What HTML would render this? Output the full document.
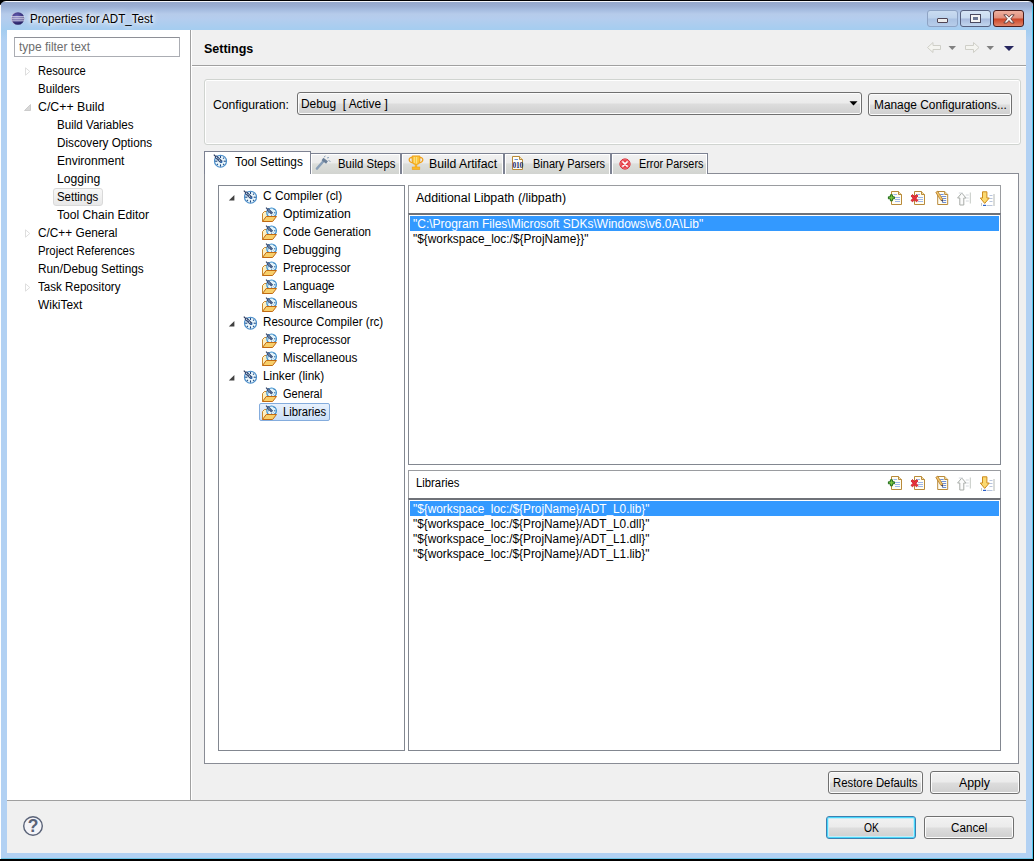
<!DOCTYPE html>
<html><head><meta charset="utf-8"><title>Properties for ADT_Test</title>
<style>
html,body{margin:0;padding:0;}
body{width:1034px;height:861px;overflow:hidden;background:#000;position:relative;font-family:"Liberation Sans",sans-serif;font-size:12px;color:#000;}
.a{position:absolute;}
.t{position:absolute;white-space:nowrap;line-height:18px;height:18px;transform-origin:0 50%;}
.b{font-weight:bold;}
#frame{left:0;top:1px;width:1034px;height:858px;background:linear-gradient(#f4f6fb 0,#f4f6fb 1px,#96a9cc 1.5px,#9aaed2 5px,#a6bde0 9px,#b6cbea 13px,#b4cdee 18px,#a4cdf0 29px,#b2d1f3 40px,#b2d1f3 100%);border-radius:6px 6px 0 0;}
#content{left:7px;top:30px;width:1019px;height:823px;background:#f0f0f0;}
#leftpane{left:7px;top:30px;width:183px;height:770px;background:#fff;}
.btn{position:absolute;box-sizing:border-box;border:1px solid #707070;border-radius:3px;background:linear-gradient(#f2f2f2 0,#ebebeb 48%,#dddddd 52%,#cfcfcf 100%);box-shadow:inset 0 0 0 1px #fcfcfc;}
.wb{box-sizing:border-box;border:1px solid #8ea3c4;border-radius:3px;background:linear-gradient(#c9dbf0 0,#bdd2ec 48%,#a9c1e2 52%,#b7cdea 100%);}
.tab{position:absolute;box-sizing:border-box;border:1px solid #7d8292;border-bottom:none;background:linear-gradient(#f2f2f2 0,#ebebeb 45%,#dcdedb 49%,#d2d4d0 100%);box-shadow:inset 1px 1px 0 #fff, inset -1px 0 0 #fff;}
.list{position:absolute;box-sizing:border-box;background:#fff;border:1px solid #828790;}
.sel{position:absolute;background:#3399ff;height:15px;}
</style></head><body>
<div class="a" id="frame"></div>
<div class="a" id="content"></div>
<div class="a" id="leftpane"></div>
<svg width="0" height="0" style="position:absolute"><defs>
<g id="icTool">
<circle cx="7.5" cy="8.2" r="6" fill="#eaf6fb" stroke="#4a8ecb" stroke-width="1.15"/>
<g stroke="#1f4a86" stroke-width="1.1">
<line x1="7.5" y1="2.8" x2="7.5" y2="5"/><line x1="7.5" y1="11.4" x2="7.5" y2="13.6"/>
<line x1="2.1" y1="8.2" x2="4.3" y2="8.2"/><line x1="10.7" y1="8.2" x2="12.9" y2="8.2"/>
<line x1="3.9" y1="11.8" x2="4.9" y2="10.8"/><line x1="11.1" y1="11.8" x2="10.1" y2="10.8"/>
<line x1="11.1" y1="4.6" x2="10.1" y2="5.6"/>
</g>
<path d="M.8 1.6 L3.2 4" stroke="#2a3a5e" stroke-width="1.2"/>
<path d="M2.6 3.4 L8.4 9" stroke="#2f4672" stroke-width="3" stroke-linecap="butt"/>
<path d="M3.2 4 L7.8 8.4" stroke="#cfe2f4" stroke-width="1.1" stroke-dasharray="1.1 .9"/>
<path d="M7 9.8 L9.4 7.6 L9.2 10 Z" fill="#1f5fae"/>
</g>
<g id="icOpt">
<path d="M1.5 14.5 L1.5 6.5 L3.5 4.5 L8 4.5 L9.5 6.5 L12.5 6.5 L12.5 9.5" fill="#fdf0c2" stroke="#c8852a" stroke-width="1"/>
<circle cx="10.6" cy="5.8" r="4.8" fill="#e2f4fb" stroke="#3b8fcf" stroke-width="1.2"/>
<g stroke="#2a5f9a" stroke-width="1"><line x1="10.6" y1="8.4" x2="10.6" y2="9.8"/><line x1="13" y1="5.8" x2="14.4" y2="5.8"/><line x1="12.6" y1="3" x2="13.4" y2="2.2"/><line x1="7" y1="5.8" x2="7.8" y2="5.8"/><line x1="13.3" y1="8.4" x2="12.6" y2="7.7"/></g>
<path d="M5 .6 L6.8 2.4" stroke="#2a3a5e" stroke-width="1.1"/>
<path d="M6.4 2 L11.2 6.6" stroke="#2f4672" stroke-width="2.6"/>
<path d="M6.9 2.5 L10.6 6" stroke="#cfe2f4" stroke-width="1" stroke-dasharray="1 .9"/>
<path d="M1.5 14.5 L5.2 9.5 L15.5 9.5 L11.6 14.5 Z" fill="#f8cf6a" stroke="#c26a12" stroke-width="1" stroke-linejoin="round"/>
</g>
<g id="doc">
<path d="M4.5 1.5 L11.5 1.5 L14.5 4.5 L14.5 14.5 L4.5 14.5 Z" fill="#fffdf2" stroke="#b98a3a" stroke-width="1"/>
<path d="M11.5 1.5 L11.5 4.5 L14.5 4.5" fill="#f3dfa8" stroke="#b98a3a" stroke-width="1"/>
<g stroke="#9db6ea" stroke-width="1"><line x1="6.5" y1="4.5" x2="10" y2="4.5"/><line x1="8" y1="7.5" x2="13" y2="7.5"/><line x1="8" y1="9.5" x2="13" y2="9.5"/><line x1="8" y1="11.5" x2="13" y2="11.5"/></g>
</g>
<g id="icAdd"><use href="#doc"/>
<path d="M3.4 4.8 L5.4 4.8 L5.4 6.8 L7.4 6.8 L7.4 8.8 L5.4 8.8 L5.4 10.8 L3.4 10.8 L3.4 8.8 L1.4 8.8 L1.4 6.8 L3.4 6.8 Z" fill="#7ec840" stroke="#1f6a1a" stroke-width="1" stroke-linejoin="round"/></g>
<g id="icDel"><use href="#doc"/>
<path d="M1 6 L2.6 4.6 L4.5 6.6 L6.4 4.6 L8 6 L6 8.2 L8 10.4 L6.4 11.8 L4.5 9.8 L2.6 11.8 L1 10.4 L3 8.2 Z" fill="#e8323c" stroke="#c41822" stroke-width=".8" stroke-linejoin="round"/></g>
<g id="icEdit" transform="translate(1.2,0)">
<path d="M3.5 1.5 L10.5 1.5 L13.5 4.5 L13.5 14.5 L3.5 14.5 Z" fill="#fffdf2" stroke="#b98a3a" stroke-width="1"/>
<path d="M10.5 1.5 L10.5 4.5 L13.5 4.5" fill="#f3dfa8" stroke="#b98a3a" stroke-width="1"/>
<g stroke="#6f8fd6" stroke-width="1"><line x1="6" y1="4.5" x2="9.5" y2="4.5"/><line x1="7" y1="6.5" x2="12" y2="6.5"/><line x1="8" y1="8.5" x2="12" y2="8.5"/><line x1="9" y1="10.5" x2="12" y2="10.5"/><line x1="8" y1="12.5" x2="12" y2="12.5"/></g>
<path d="M1.6 2.4 L3.4 1.2 L8.6 9.4 L6.8 10.6 Z" fill="#f3c56a" stroke="#b07a2a" stroke-width=".8"/>
<path d="M6.8 10.6 L8.6 9.4 L9 12.2 Z" fill="#3a3a5a"/>
</g>
<g id="icUp" transform="translate(.8,1.5)">
<path d="M5 1.5 L9.2 6.5 L7 6.5 L7 13.5 L3 13.5 L3 6.5 L.8 6.5 Z" fill="#fbfbfb" stroke="#a8aca8" stroke-width="1" stroke-linejoin="round"/>
<line x1="13.5" y1="1" x2="13.5" y2="12" stroke="#c4c8c4" stroke-width="1"/>
<g stroke="#d4d8dc" stroke-width="1"><line x1="2" y1="1.5" x2="6" y2="1.5"/><line x1="9" y1="3.5" x2="12" y2="3.5"/><line x1="9" y1="6.5" x2="12" y2="6.5"/><line x1="9" y1="9.5" x2="12" y2="9.5"/></g>
</g>
<g id="icDown" transform="translate(.5,1)">
<g stroke="#b8c4dc" stroke-width="1"><line x1="10" y1="4.5" x2="13" y2="4.5"/><line x1="10" y1="7.5" x2="13" y2="7.5"/><line x1="10" y1="10.5" x2="13" y2="10.5"/><line x1="7" y1="14.5" x2="13" y2="14.5"/></g>
<line x1="14.5" y1="3" x2="14.5" y2="15" stroke="#b4b8b4" stroke-width="1"/>
<line x1="2" y1="12" x2="2" y2="15" stroke="#c4c8c4" stroke-width="1"/>
<path d="M3 .8 L7.4 .8 L7.4 7 L9.8 7 L5.2 12.4 L.8 7 L3 7 Z" fill="#fbd970" stroke="#cc8a1c" stroke-width="1" stroke-linejoin="round"/>
<line x1="3.5" y1="14.5" x2="6.5" y2="14.5" stroke="#2a5fc8" stroke-width="1.4"/>
</g>
<g id="icSteps">
<path d="M2 13.5 L9 5.5" stroke="#8aa0b8" stroke-width="2.6" stroke-linecap="round"/>
<path d="M7.5 4 L12 7.5" stroke="#6a7f98" stroke-width="3"/>
<g stroke="#8aa0b8" stroke-width="1"><line x1="9" y1="2" x2="10.5" y2="1"/><line x1="12" y1="3" x2="14" y2="2.5"/><line x1="13.5" y1="5.5" x2="15.5" y2="6.5"/></g>
</g>
<g id="icArt">
<path d="M4.2 1 L11.8 1 L11.8 6 Q11.8 9.6 8 9.6 Q4.2 9.6 4.2 6 Z" fill="#fbc53a" stroke="#f0a018" stroke-width="1"/>
<path d="M4.2 2.5 Q1 2.5 1.2 5 Q1.5 7.5 4.8 7.8" fill="none" stroke="#f0a018" stroke-width="1.3"/>
<path d="M11.8 2.5 Q15 2.5 14.8 5 Q14.5 7.5 11.2 7.8" fill="none" stroke="#f0a018" stroke-width="1.3"/>
<rect x="6.8" y="9.6" width="2.4" height="2.6" fill="#f6b428"/>
<rect x="4.2" y="12" width="7.6" height="2.6" fill="#f9b92a" stroke="#f0a018" stroke-width=".6"/>
<g stroke="#fde9a0" stroke-width=".8"><line x1="6.3" y1="2" x2="6.3" y2="8"/><line x1="8.6" y1="2" x2="8.6" y2="8.6"/></g>
</g>
<g id="icBin">
<path d="M2.5 1.5 L9.5 1.5 L12.5 4.5 L12.5 14.5 L2.5 14.5 Z" fill="#fffef6" stroke="#b98a3a" stroke-width="1"/>
<path d="M9.5 1.5 L9.5 4.5 L12.5 4.5" fill="#f3dfa8" stroke="#b98a3a" stroke-width="1"/>
<line x1="4.5" y1="4.5" x2="8" y2="4.5" stroke="#6a8fd8" stroke-width="1"/>
<text x="2.6" y="13.2" font-family="Liberation Serif, serif" font-weight="bold" font-size="7.5" fill="#1a2a6a" letter-spacing="-.3">010</text>
</g>
<g id="icErr">
<circle cx="7" cy="8" r="5.1" fill="#e63c44" stroke="#d8242e" stroke-width="1"/>
<circle cx="7" cy="8" r="4.3" fill="none" stroke="#f28a90" stroke-width=".7"/>
<path d="M4.9 5.9 L9.1 10.1 M9.1 5.9 L4.9 10.1" stroke="#fff" stroke-width="1.6" stroke-linecap="round"/>
</g>
</defs></svg>

<!-- TITLE -->
<svg class="a" style="left:10px;top:11px" width="15" height="15" viewBox="0 0 15 15"><defs><radialGradient id="eg" cx="40%" cy="35%" r="70%"><stop offset="0" stop-color="#6a62b8"/><stop offset="1" stop-color="#1f1a5c"/></radialGradient></defs><ellipse cx="6" cy="7.5" rx="5" ry="6" fill="#c9a0c0" opacity=".6"/><circle cx="8" cy="7.5" r="6.3" fill="url(#eg)"/><rect x="1.2" y="5.3" width="13.4" height="1.1" fill="#e8e8f4"/><rect x="1.2" y="7.3" width="13.4" height="1.1" fill="#e8e8f4"/><rect x="1.5" y="9.3" width="13" height="1" fill="#d0d0e8"/></svg>
<div class="t " id="t1" style="left:29.7px;top:9.9px;transform:scaleX(0.9647);text-shadow:0 0 4px #fff,0 0 7px #fff,0 0 9px rgba(255,255,255,.8);">Properties for ADT_Test</div>
<div class="a wb" style="left:927px;top:10px;width:31px;height:17px;"><div class="a" style="left:9px;top:7px;width:9px;height:3px;background:#ececec;border:1px solid #4f4454;border-radius:1px"></div></div>
<div class="a wb" style="left:960px;top:10px;width:31px;height:17px;background:linear-gradient(#d6e4f5 0,#c9dbf0 48%,#a7b9dc 52%,#c2d6ee 100%);border-color:#56607e"><div class="a" style="left:10px;top:4px;width:5px;height:3px;background:#6c7894;border:2px solid #f4f4f4;outline:1px solid #4a4a60"></div></div>
<div class="a wb" style="left:993px;top:10px;width:31px;height:17px;background:linear-gradient(#eeb0a0 0,#e08f7c 48%,#cc4426 52%,#e08468 100%);border-color:#4a1c1c"><svg class="a" style="left:9px;top:3px" width="12" height="10" viewBox="0 0 12 10"><path d="M.8 .8 L3.8 .8 L6 3.2 L8.2 .8 L11.2 .8 L7.8 4.8 L11.2 9 L8.2 9 L6 6.5 L3.8 9 L.8 9 L4.2 4.8 Z" fill="#fafafa" stroke="#5a3a3a" stroke-width=".9"/></svg></div>
<!-- LEFT -->
<div class="a" style="left:14px;top:37px;width:164px;height:18px;background:#fff;border:1px solid #abadb3;border-top-color:#8e9097"></div>
<div class="t " id="t2" style="left:19.4px;top:37.5px;transform:scaleX(0.9961);color:#6d6d6d;">type filter text</div>
<div class="a" style="left:53px;top:188px;width:48px;height:16px;border:1px solid #d9d9d9;border-radius:3px;background:linear-gradient(#f8f8f8,#e8e8e8)"></div>
<svg class="a" style="left:25px;top:67px" width="6" height="9" viewBox="0 0 6 9"><path d="M.5 .8 L4.8 4.5 L.5 8.2 Z" fill="#fff" stroke="#dedede" stroke-width="1"/></svg>
<div class="t " id="t3" style="left:38.2px;top:62.0px;transform:scaleX(0.9307);">Resource</div>
<div class="t " id="t4" style="left:38.2px;top:80.0px;transform:scaleX(0.9640);">Builders</div>
<svg class="a" style="left:24px;top:104px" width="7" height="7" viewBox="0 0 7 7"><path d="M6.5 .5 L6.5 6.5 L.5 6.5 Z" fill="#d8d8d8" stroke="#c4c4c4" stroke-width=".8"/></svg>
<div class="t " id="t5" style="left:38.2px;top:98.0px;transform:scaleX(1.0262);">C/C++ Build</div>
<div class="t " id="t6" style="left:57.3px;top:116.0px;transform:scaleX(0.9664);">Build Variables</div>
<div class="t " id="t7" style="left:57.3px;top:134.0px;transform:scaleX(0.9766);">Discovery Options</div>
<div class="t " id="t8" style="left:57.3px;top:152.0px;transform:scaleX(1.0004);">Environment</div>
<div class="t " id="t9" style="left:57.3px;top:170.0px;transform:scaleX(1.0136);">Logging</div>
<div class="t " id="t10" style="left:57.3px;top:188.0px;transform:scaleX(0.9525);">Settings</div>
<div class="t " id="t11" style="left:57.3px;top:206.0px;transform:scaleX(1.0078);">Tool Chain Editor</div>
<svg class="a" style="left:25px;top:229px" width="6" height="9" viewBox="0 0 6 9"><path d="M.5 .8 L4.8 4.5 L.5 8.2 Z" fill="#fff" stroke="#dedede" stroke-width="1"/></svg>
<div class="t " id="t12" style="left:38.2px;top:224.0px;transform:scaleX(0.9849);">C/C++ General</div>
<div class="t " id="t13" style="left:38.2px;top:242.0px;transform:scaleX(0.9466);">Project References</div>
<div class="t " id="t14" style="left:38.2px;top:260.0px;transform:scaleX(0.9841);">Run/Debug Settings</div>
<svg class="a" style="left:25px;top:283px" width="6" height="9" viewBox="0 0 6 9"><path d="M.5 .8 L4.8 4.5 L.5 8.2 Z" fill="#fff" stroke="#dedede" stroke-width="1"/></svg>
<div class="t " id="t15" style="left:38.2px;top:278.0px;transform:scaleX(0.9663);">Task Repository</div>
<div class="t " id="t16" style="left:38.2px;top:296.0px;transform:scaleX(0.9917);">WikiText</div>
<div class="a" style="left:190px;top:30px;width:1px;height:770px;background:#a0a0a0"></div>
<!-- RIGHT -->
<div class="t b" id="t17" style="left:204.4px;top:40.4px;transform:scaleX(1.0413);">Settings</div>
<svg class="a" style="left:926px;top:41px" width="90" height="14" viewBox="0 0 90 14">
<path d="M1.5 6.5 L7 1.5 L7 4.5 L14.5 4.5 L14.5 8.5 L7 8.5 L7 11.5 Z" fill="#f4f4f0" stroke="#cfcfc8" stroke-width="1"/>
<path d="M22.5 5 L30 5 L26.25 9 Z" fill="#808080"/>
<path d="M53 6.5 L47.5 1.5 L47.5 4.5 L39.5 4.5 L39.5 8.5 L47.5 8.5 L47.5 11.5 Z" fill="#f4f4f0" stroke="#cfcfc8" stroke-width="1"/>
<path d="M60.5 5 L68 5 L64.25 9 Z" fill="#808080"/>
<path d="M78 5 L88 5 L83 10 Z" fill="#26265e"/>
</svg>
<div class="a" style="left:192px;top:65px;width:834px;height:1px;background:#a0a0a0"></div>
<div class="a" style="left:192px;top:66px;width:834px;height:1px;background:#fff"></div>
<div class="a" style="left:191px;top:30px;width:1px;height:770px;background:#fff"></div>
<div class="a" style="left:204px;top:79px;width:815px;height:64px;border:1px solid #d0d4d0;border-radius:3px;box-shadow:inset 0 0 0 1px #fff"></div>
<div class="t " id="t18" style="left:212.6px;top:95.6px;transform:scaleX(1.0158);">Configuration:</div>
<div class="btn" style="left:297px;top:92px;width:565px;height:23px;"></div>
<div class="t " id="t19" style="left:301.3px;top:94.9px;transform:scaleX(0.9921);white-space:pre;">Debug  [ Active ]</div>
<svg class="a" style="left:849px;top:101px" width="9" height="5" viewBox="0 0 9 5"><path d="M.5 .3 L8.5 .3 L4.5 4.6 Z" fill="#000"/></svg>
<div class="btn" style="left:868px;top:93px;width:144px;height:23px;"></div>
<div class="t " id="t20" style="left:873.8px;top:96.3px;transform:scaleX(0.9904);">Manage Configurations...</div>
<div class="a" style="left:204px;top:173px;width:813px;height:589px;background:#fff;border:1px solid #898c95"></div>
<div class="tab" style="left:310px;top:153px;width:91px;height:21px;"></div>
<div class="t " id="t21" style="left:337.5px;top:154.7px;transform:scaleX(0.9456);">Build Steps</div>
<div class="tab" style="left:401px;top:153px;width:103px;height:21px;"></div>
<div class="t " id="t22" style="left:429.4px;top:154.7px;transform:scaleX(1.0209);">Build Artifact</div>
<div class="tab" style="left:504px;top:153px;width:107px;height:21px;"></div>
<div class="t " id="t23" style="left:532.5px;top:154.7px;transform:scaleX(0.9161);">Binary Parsers</div>
<div class="tab" style="left:611px;top:153px;width:97px;height:21px;"></div>
<div class="t " id="t24" style="left:639.2px;top:154.7px;transform:scaleX(0.9027);">Error Parsers</div>
<div class="tab" style="left:204px;top:151px;width:107px;height:23px;background:#fff;"></div>
<div class="t " id="t25" style="left:234.7px;top:152.7px;transform:scaleX(0.9881);">Tool Settings</div>
<div class="a" style="left:218px;top:185px;width:185px;height:564px;background:#fff;border:1px solid #828790"></div>
<div class="a" style="left:259px;top:403px;width:69px;height:16px;border:1px solid #84acdd;border-radius:2px;background:linear-gradient(#e8f1fc,#c9def8)"></div>
<svg class="a" style="left:228px;top:193.5px" width="7" height="7" viewBox="0 0 7 7"><path d="M6.4 .9 L6.4 6.5 L.8 6.5 Z" fill="#404040"/></svg>
<svg class="a" style="left:243px;top:188.7px" width="16" height="16" viewBox="0 0 16 16"><use href="#icTool"/></svg>
<div class="t " id="t26" style="left:263.4px;top:186.8px;transform:scaleX(0.9898);">C Compiler (cl)</div>
<svg class="a" style="left:261px;top:207.2px" width="16" height="16" viewBox="0 0 16 16"><use href="#icOpt"/></svg>
<div class="t " id="t27" style="left:282.5px;top:204.8px;transform:scaleX(1.0179);">Optimization</div>
<svg class="a" style="left:261px;top:225.2px" width="16" height="16" viewBox="0 0 16 16"><use href="#icOpt"/></svg>
<div class="t " id="t28" style="left:282.5px;top:222.8px;transform:scaleX(0.9627);">Code Generation</div>
<svg class="a" style="left:261px;top:243.2px" width="16" height="16" viewBox="0 0 16 16"><use href="#icOpt"/></svg>
<div class="t " id="t29" style="left:282.5px;top:240.8px;transform:scaleX(0.9955);">Debugging</div>
<svg class="a" style="left:261px;top:261.2px" width="16" height="16" viewBox="0 0 16 16"><use href="#icOpt"/></svg>
<div class="t " id="t30" style="left:282.5px;top:258.8px;transform:scaleX(0.9471);">Preprocessor</div>
<svg class="a" style="left:261px;top:279.2px" width="16" height="16" viewBox="0 0 16 16"><use href="#icOpt"/></svg>
<div class="t " id="t31" style="left:282.5px;top:276.8px;transform:scaleX(0.9646);">Language</div>
<svg class="a" style="left:261px;top:297.2px" width="16" height="16" viewBox="0 0 16 16"><use href="#icOpt"/></svg>
<div class="t " id="t32" style="left:282.5px;top:294.8px;transform:scaleX(0.9783);">Miscellaneous</div>
<svg class="a" style="left:228px;top:319.5px" width="7" height="7" viewBox="0 0 7 7"><path d="M6.4 .9 L6.4 6.5 L.8 6.5 Z" fill="#404040"/></svg>
<svg class="a" style="left:243px;top:314.7px" width="16" height="16" viewBox="0 0 16 16"><use href="#icTool"/></svg>
<div class="t " id="t33" style="left:263.4px;top:312.8px;transform:scaleX(0.9691);">Resource Compiler (rc)</div>
<svg class="a" style="left:261px;top:333.2px" width="16" height="16" viewBox="0 0 16 16"><use href="#icOpt"/></svg>
<div class="t " id="t34" style="left:282.5px;top:330.8px;transform:scaleX(0.9471);">Preprocessor</div>
<svg class="a" style="left:261px;top:351.2px" width="16" height="16" viewBox="0 0 16 16"><use href="#icOpt"/></svg>
<div class="t " id="t35" style="left:282.5px;top:348.8px;transform:scaleX(0.9783);">Miscellaneous</div>
<svg class="a" style="left:228px;top:373.5px" width="7" height="7" viewBox="0 0 7 7"><path d="M6.4 .9 L6.4 6.5 L.8 6.5 Z" fill="#404040"/></svg>
<svg class="a" style="left:243px;top:368.7px" width="16" height="16" viewBox="0 0 16 16"><use href="#icTool"/></svg>
<div class="t " id="t36" style="left:263.4px;top:366.8px;transform:scaleX(0.9852);">Linker (link)</div>
<svg class="a" style="left:261px;top:387.2px" width="16" height="16" viewBox="0 0 16 16"><use href="#icOpt"/></svg>
<div class="t " id="t37" style="left:282.5px;top:384.8px;transform:scaleX(0.9180);">General</div>
<svg class="a" style="left:261px;top:405.2px" width="16" height="16" viewBox="0 0 16 16"><use href="#icOpt"/></svg>
<div class="t " id="t38" style="left:282.5px;top:402.8px;transform:scaleX(0.9385);">Libraries</div>
<div class="a" style="left:408px;top:185px;width:591px;height:278px;background:#fff;border:1px solid #9a9ca0"></div>
<div class="t " id="t39" style="left:416.4px;top:189.3px;transform:scaleX(1.0321);">Additional Libpath (/libpath)</div>
<svg class="a" style="left:887px;top:190px" width="16" height="16" viewBox="0 0 16 16"><use href="#icAdd"/></svg>
<svg class="a" style="left:910px;top:190px" width="16" height="16" viewBox="0 0 16 16"><use href="#icDel"/></svg>
<svg class="a" style="left:933px;top:190px" width="16" height="16" viewBox="0 0 16 16"><use href="#icEdit"/></svg>
<svg class="a" style="left:956px;top:190px" width="16" height="16" viewBox="0 0 16 16"><use href="#icUp"/></svg>
<svg class="a" style="left:979px;top:190px" width="16" height="16" viewBox="0 0 16 16"><use href="#icDown"/></svg>
<div class="list" style="left:408px;top:213px;width:593px;height:252px;border-top:2px solid #6f7278"></div>
<div class="sel" style="left:410px;top:216px;width:589px;"></div>
<div class="t " id="t40" style="left:412.5px;top:214.5px;transform:scaleX(1.0009);color:#fff;">"C:\Program Files\Microsoft SDKs\Windows\v6.0A\Lib"</div>
<div class="t " id="t41" style="left:412.5px;top:229.5px;transform:scaleX(0.9893);">"${workspace_loc:/${ProjName}}"</div>
<div class="a" style="left:408px;top:470px;width:591px;height:279px;background:#fff;border:1px solid #9a9ca0"></div>
<div class="t " id="t42" style="left:416.4px;top:474.3px;transform:scaleX(0.9428);">Libraries</div>
<svg class="a" style="left:887px;top:475px" width="16" height="16" viewBox="0 0 16 16"><use href="#icAdd"/></svg>
<svg class="a" style="left:910px;top:475px" width="16" height="16" viewBox="0 0 16 16"><use href="#icDel"/></svg>
<svg class="a" style="left:933px;top:475px" width="16" height="16" viewBox="0 0 16 16"><use href="#icEdit"/></svg>
<svg class="a" style="left:956px;top:475px" width="16" height="16" viewBox="0 0 16 16"><use href="#icUp"/></svg>
<svg class="a" style="left:979px;top:475px" width="16" height="16" viewBox="0 0 16 16"><use href="#icDown"/></svg>
<div class="list" style="left:408px;top:498px;width:593px;height:253px;border-top:2px solid #6f7278"></div>
<div class="sel" style="left:410px;top:501px;width:589px;"></div>
<div class="t " id="t43" style="left:412.5px;top:499.5px;transform:scaleX(0.9851);color:#fff;">"${workspace_loc:/${ProjName}/ADT_L0.lib}"</div>
<div class="t " id="t44" style="left:412.5px;top:514.5px;transform:scaleX(0.9851);">"${workspace_loc:/${ProjName}/ADT_L0.dll}"</div>
<div class="t " id="t45" style="left:412.5px;top:529.5px;transform:scaleX(0.9851);">"${workspace_loc:/${ProjName}/ADT_L1.dll}"</div>
<div class="t " id="t46" style="left:412.5px;top:544.5px;transform:scaleX(0.9851);">"${workspace_loc:/${ProjName}/ADT_L1.lib}"</div>
<div class="btn" style="left:828px;top:771px;width:95px;height:23px;"></div>
<div class="t " id="t47" style="left:833.2px;top:774.0px;transform:scaleX(0.9455);">Restore Defaults</div>
<div class="btn" style="left:930px;top:771px;width:90px;height:23px;"></div>
<div class="t " id="t48" style="left:958.9px;top:774.0px;transform:scaleX(1.0289);">Apply</div>
<svg class="a" style="left:213px;top:153.3px" width="16" height="16" viewBox="0 0 16 16"><use href="#icTool"/></svg>
<svg class="a" style="left:315px;top:155px" width="16" height="16" viewBox="0 0 16 16"><use href="#icSteps"/></svg>
<svg class="a" style="left:407.5px;top:154.5px" width="16" height="16" viewBox="0 0 16 16"><use href="#icArt"/></svg>
<svg class="a" style="left:510px;top:155px" width="16" height="16" viewBox="0 0 16 16"><use href="#icBin"/></svg>
<svg class="a" style="left:617.5px;top:155.5px" width="16" height="16" viewBox="0 0 16 16"><use href="#icErr"/></svg>
<!-- BOTTOM -->
<div class="a" style="left:7px;top:800px;width:1019px;height:1px;background:#a0a0a0"></div>
<svg class="a" style="left:22px;top:815px" width="22" height="22" viewBox="0 0 22 22"><circle cx="11" cy="11" r="9.3" fill="#f4f4f8" stroke="#5a6378" stroke-width="1.4"/><text x="11" y="17.2" text-anchor="middle" font-family="Liberation Sans, sans-serif" font-weight="bold" font-size="17.5" fill="#5a6378">?</text></svg>
<div class="btn" style="left:826px;top:816px;width:90px;height:23px;border-color:#3c7fb1;box-shadow:inset 0 0 0 1px #48d8fb, inset 0 0 0 2px #c4ecf8"></div>
<div class="t " id="t49" style="left:864.0px;top:819.0px;transform:scaleX(0.8591);">OK</div>
<div class="btn" style="left:924px;top:816px;width:90px;height:23px;"></div>
<div class="t " id="t50" style="left:951.0px;top:819.0px;transform:scaleX(0.9716);">Cancel</div>
<div class="a" style="left:0px;top:858px;width:1034px;height:1px;background:#6cc4e6"></div>
<div class="a" style="left:0px;top:5px;width:1px;height:854px;background:#fff"></div>
<div class="a" style="left:1032px;top:6px;width:1px;height:853px;background:#4cc8ee"></div>
<div class="a" style="left:1033px;top:4px;width:1px;height:857px;background:#000"></div>
</body></html>
